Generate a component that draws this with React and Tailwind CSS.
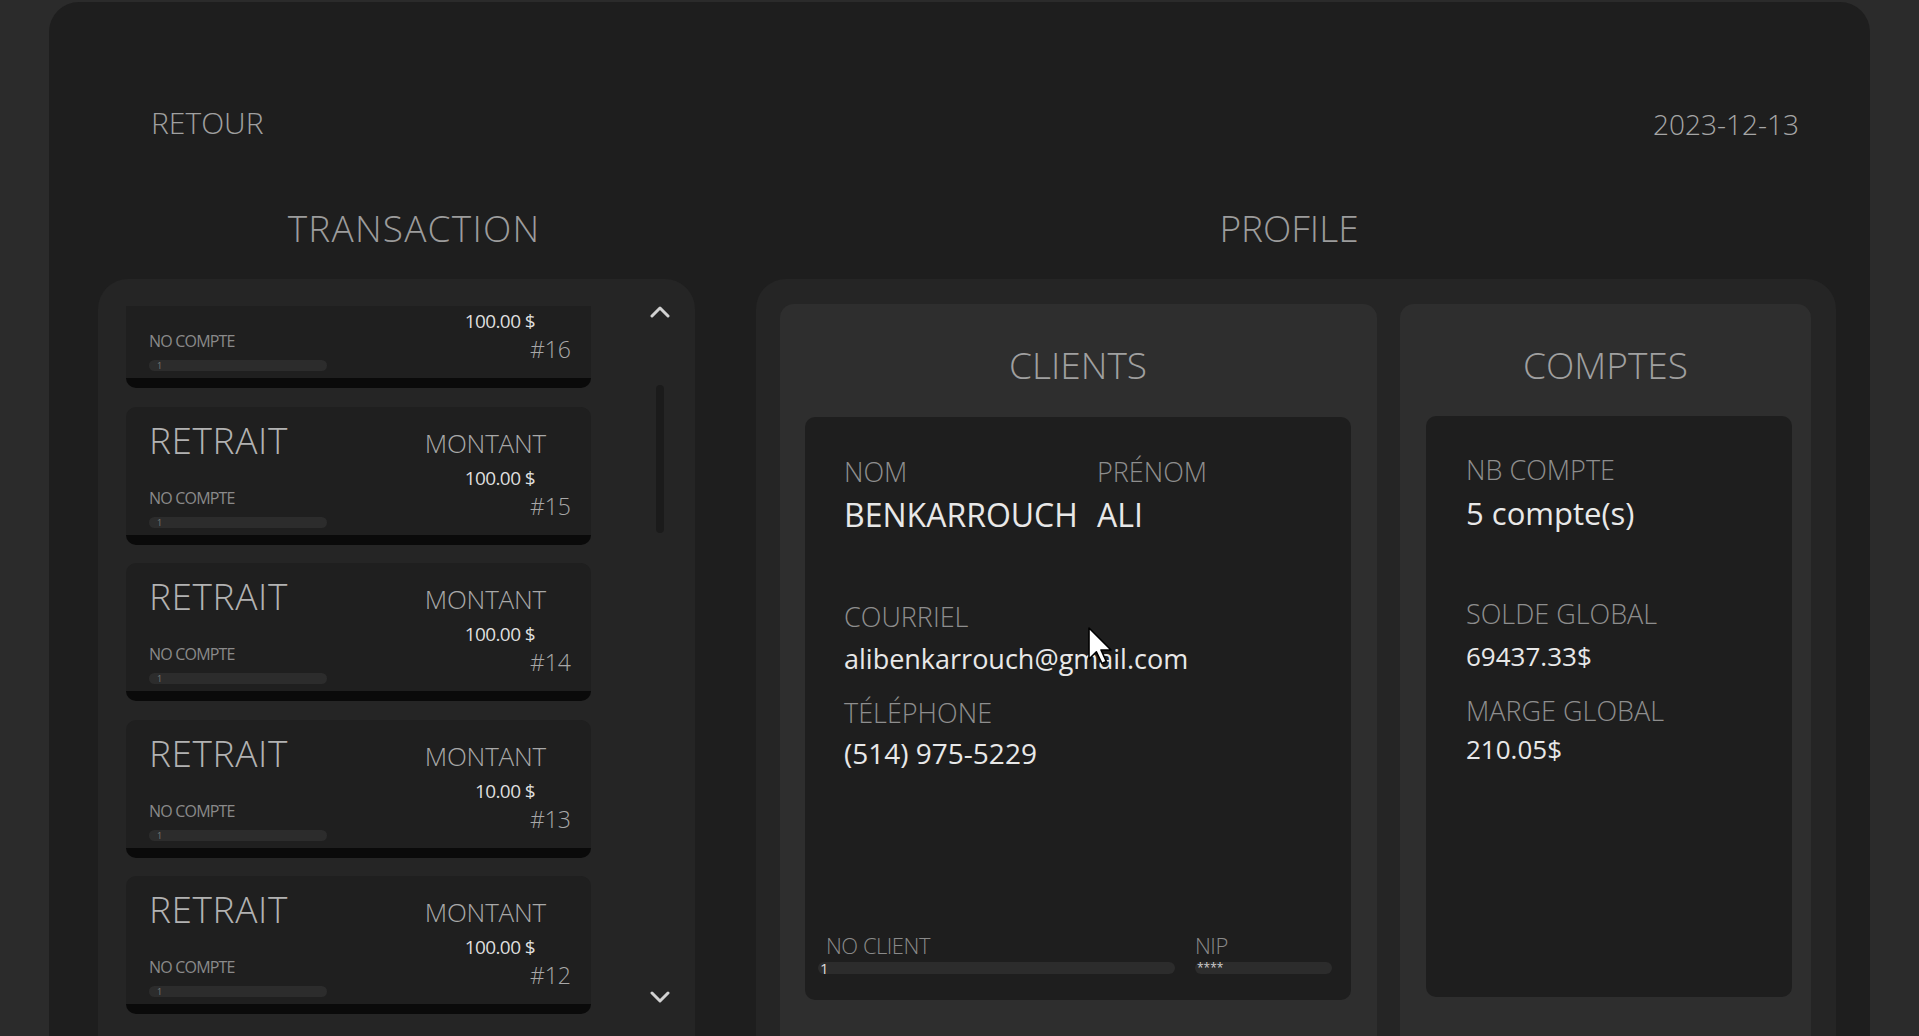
import React from 'react';

const transactions = [
  { id: 16, amount: '100.00 $' },
  { id: 15, amount: '100.00 $' },
  { id: 14, amount: '100.00 $' },
  { id: 13, amount: '10.00 $' },
  { id: 12, amount: '100.00 $' },
];

const Chevron = ({ down }) => (
  <svg width="22" height="12" viewBox="0 0 22 12" className="shrink-0">
    <polyline
      points={down ? '3,2 11,10 19,2' : '3,10 11,2 19,10'}
      fill="none"
      stroke="#d2d2d2"
      strokeWidth="3"
      strokeLinecap="round"
      strokeLinejoin="round"
    />
  </svg>
);

const TransactionCard = ({ id, amount }) => (
  <div className="h-[138px] shrink-0 rounded-[10px] border-b-[10px] border-[#0a0a0a] bg-[#1f1f1f] flex justify-between">
    <div className="flex flex-col pl-[23px]">
      <span className="mt-[14px] text-[37px] leading-none font-light tracking-[0.6px] text-[#b2b2b2]">RETRAIT</span>
      <span className="mt-[32px] text-[16px] leading-none tracking-[-0.8px] text-[#8a8a8a]">NO COMPTE</span>
      <div className="mt-[11px] h-[11px] w-[178px] rounded-full bg-[#2c2c2c] flex items-center pl-[8px]">
        <span className="text-[9px] leading-none text-[#7a7a7a]">1</span>
      </div>
    </div>
    <div className="flex flex-col items-end pr-[20px]">
      <span className="mt-[23px] mr-[25px] text-[26px] leading-none font-light tracking-[-0.2px] text-[#a8a8a8]">MONTANT</span>
      <span className="mt-[13px] mr-[36px] text-[19px] leading-none tracking-[-0.6px] text-[#dedede]">{amount}</span>
      <span className="mt-[7px] text-[23px] leading-none font-light text-[#a8a8a8]">#{id}</span>
    </div>
  </div>
);

const Field = ({ label, value, valueSize = 'text-[27px]', gap = 'mt-[12px]', className = '' }) => (
  <div className={`flex flex-col ${className}`}>
    <span className="text-[27px] leading-none font-light text-[#8e8e8e]">{label}</span>
    <span className={`${gap} ${valueSize} leading-none text-[#e8e8e8]`}>{value}</span>
  </div>
);

const Cursor = () => (
  <svg width="24" height="38" viewBox="0 0 12 19" className="absolute left-[1088px] top-[627px]">
    <polygon points="0.5,0.5 0.5,16 4.2,12.4 7,18.3 9.2,17.3 6.5,11.5 11.5,11.5" fill="#ffffff" stroke="#000000" strokeWidth="0.8" strokeLinejoin="round" />
  </svg>
);

export default function App() {
  return (
    <div className="relative h-[1036px] overflow-hidden bg-[#2b2b2b] px-[49px] pt-[2px] font-['Open_Sans',sans-serif]">
      <div className="h-[1100px] rounded-t-[30px] bg-[#1e1e1e] pt-[106px]">
        {/* header */}
        <div className="flex items-start justify-between pl-[102px] pr-[71px]">
          <span className="text-[30px] leading-none font-light text-[#a0a0a0]">RETOUR</span>
          <span className="mt-[2px] text-[28px] leading-none font-light text-[#a6a6a6]">2023-12-13</span>
        </div>

        <div className="mt-[71px] flex pl-[49px] gap-[61px]">
          {/* transactions */}
          <div className="flex flex-col w-[597px]">
            <h2 className="h-[37px] pl-[35px] text-center text-[37px] leading-none font-light tracking-[1.2px] text-[#9c9c9c]">TRANSACTION</h2>
            <div className="mt-[33px] h-[800px] rounded-[30px] bg-[#252525] flex pt-[27px] pl-[28px]">
              <div className="w-[465px] h-[720px] overflow-hidden">
                <div className="-mt-[56px] flex flex-col gap-[18.5px]">
                  {transactions.map((t) => (
                    <TransactionCard key={t.id} {...t} />
                  ))}
                </div>
              </div>
              <div className="ml-[58px] w-[22px] flex flex-col items-center">
                <Chevron />
                <div className="mt-[67px] h-[148px] w-[8px] rounded-full bg-[#1b1b1b]" />
                <div className="mt-[458px]">
                  <Chevron down />
                </div>
              </div>
            </div>
          </div>

          {/* profile */}
          <div className="flex flex-col w-[1080px]">
            <h2 className="h-[37px] pr-[14px] text-center text-[37px] leading-none font-light text-[#9c9c9c]">PROFILE</h2>
            <div className="mt-[33px] h-[800px] rounded-[30px] bg-[#252525] flex gap-[23px] pl-[24px] pt-[25px]">
              {/* clients */}
              <div className="w-[597px] h-[760px] rounded-[14px] bg-[#2e2e2e] flex flex-col pt-[42px]">
                <h3 className="h-[36px] pl-[25px] w-[571px] text-center text-[37px] leading-none font-light text-[#a0a0a0]">CLIENTS</h3>
                <div className="mt-[35px] ml-[25px] w-[546px] h-[583px] rounded-[10px] bg-[#1e1e1e] flex flex-col">
                  <div className="pl-[39px] pt-[41px] grid grid-cols-[253px_1fr]">
                    <Field label="NOM" value="BENKARROUCH" valueSize="text-[32px]" gap="mt-[14px]" />
                    <Field label="PRÉNOM" value="ALI" valueSize="text-[32px]" gap="mt-[14px]" />
                  </div>
                  <Field className="pl-[39px] mt-[72px]" label="COURRIEL" value="alibenkarrouch@gmail.com" gap="mt-[15px]" />
                  <Field className="pl-[39px] mt-[27px]" label="TÉLÉPHONE" value="(514) 975-5229" valueSize="text-[28px]" gap="mt-[13px]" />
                  <div className="mt-auto pb-[26px] pl-[13px] flex gap-[20px]">
                    <div className="flex flex-col">
                      <span className="pl-[8px] text-[22px] leading-none font-light tracking-[-0.5px] text-[#8a8a8a]">NO CLIENT</span>
                      <div className="mt-[6px] h-[12px] w-[357px] rounded-full bg-[#2c2c2c] flex items-center pl-[2px]">
                        <span className="text-[15px] leading-[12px] text-[#dcdcdc]">1</span>
                      </div>
                    </div>
                    <div className="flex flex-col">
                      <span className="text-[22px] leading-none font-light tracking-[-0.5px] text-[#8a8a8a]">NIP</span>
                      <div className="mt-[6px] h-[12px] w-[137px] rounded-full bg-[#2c2c2c] flex items-start pl-[2px]">
                        <span className="text-[12px] leading-[12px] text-[#cfcfcf]">****</span>
                      </div>
                    </div>
                  </div>
                </div>
              </div>

              {/* comptes */}
              <div className="w-[411px] h-[760px] rounded-[14px] bg-[#2e2e2e] flex flex-col pt-[42px]">
                <h3 className="h-[36px] text-center text-[37px] leading-none font-light text-[#a0a0a0]">COMPTES</h3>
                <div className="mt-[34px] ml-[26px] w-[366px] h-[581px] rounded-[10px] bg-[#1e1e1e] flex flex-col pl-[40px] pt-[40px]">
                  <Field label="NB COMPTE" value="5 compte(s)" valueSize="text-[31px]" gap="mt-[15px]" />
                  <Field className="mt-[71px]" label="SOLDE GLOBAL" value="69437.33$" valueSize="text-[26px]" gap="mt-[16px]" />
                  <Field className="mt-[28px]" label="MARGE GLOBAL" value="210.05$" valueSize="text-[26px]" gap="mt-[12px]" />
                </div>
              </div>
            </div>
          </div>
        </div>
      </div>
      <Cursor />
    </div>
  );
}
